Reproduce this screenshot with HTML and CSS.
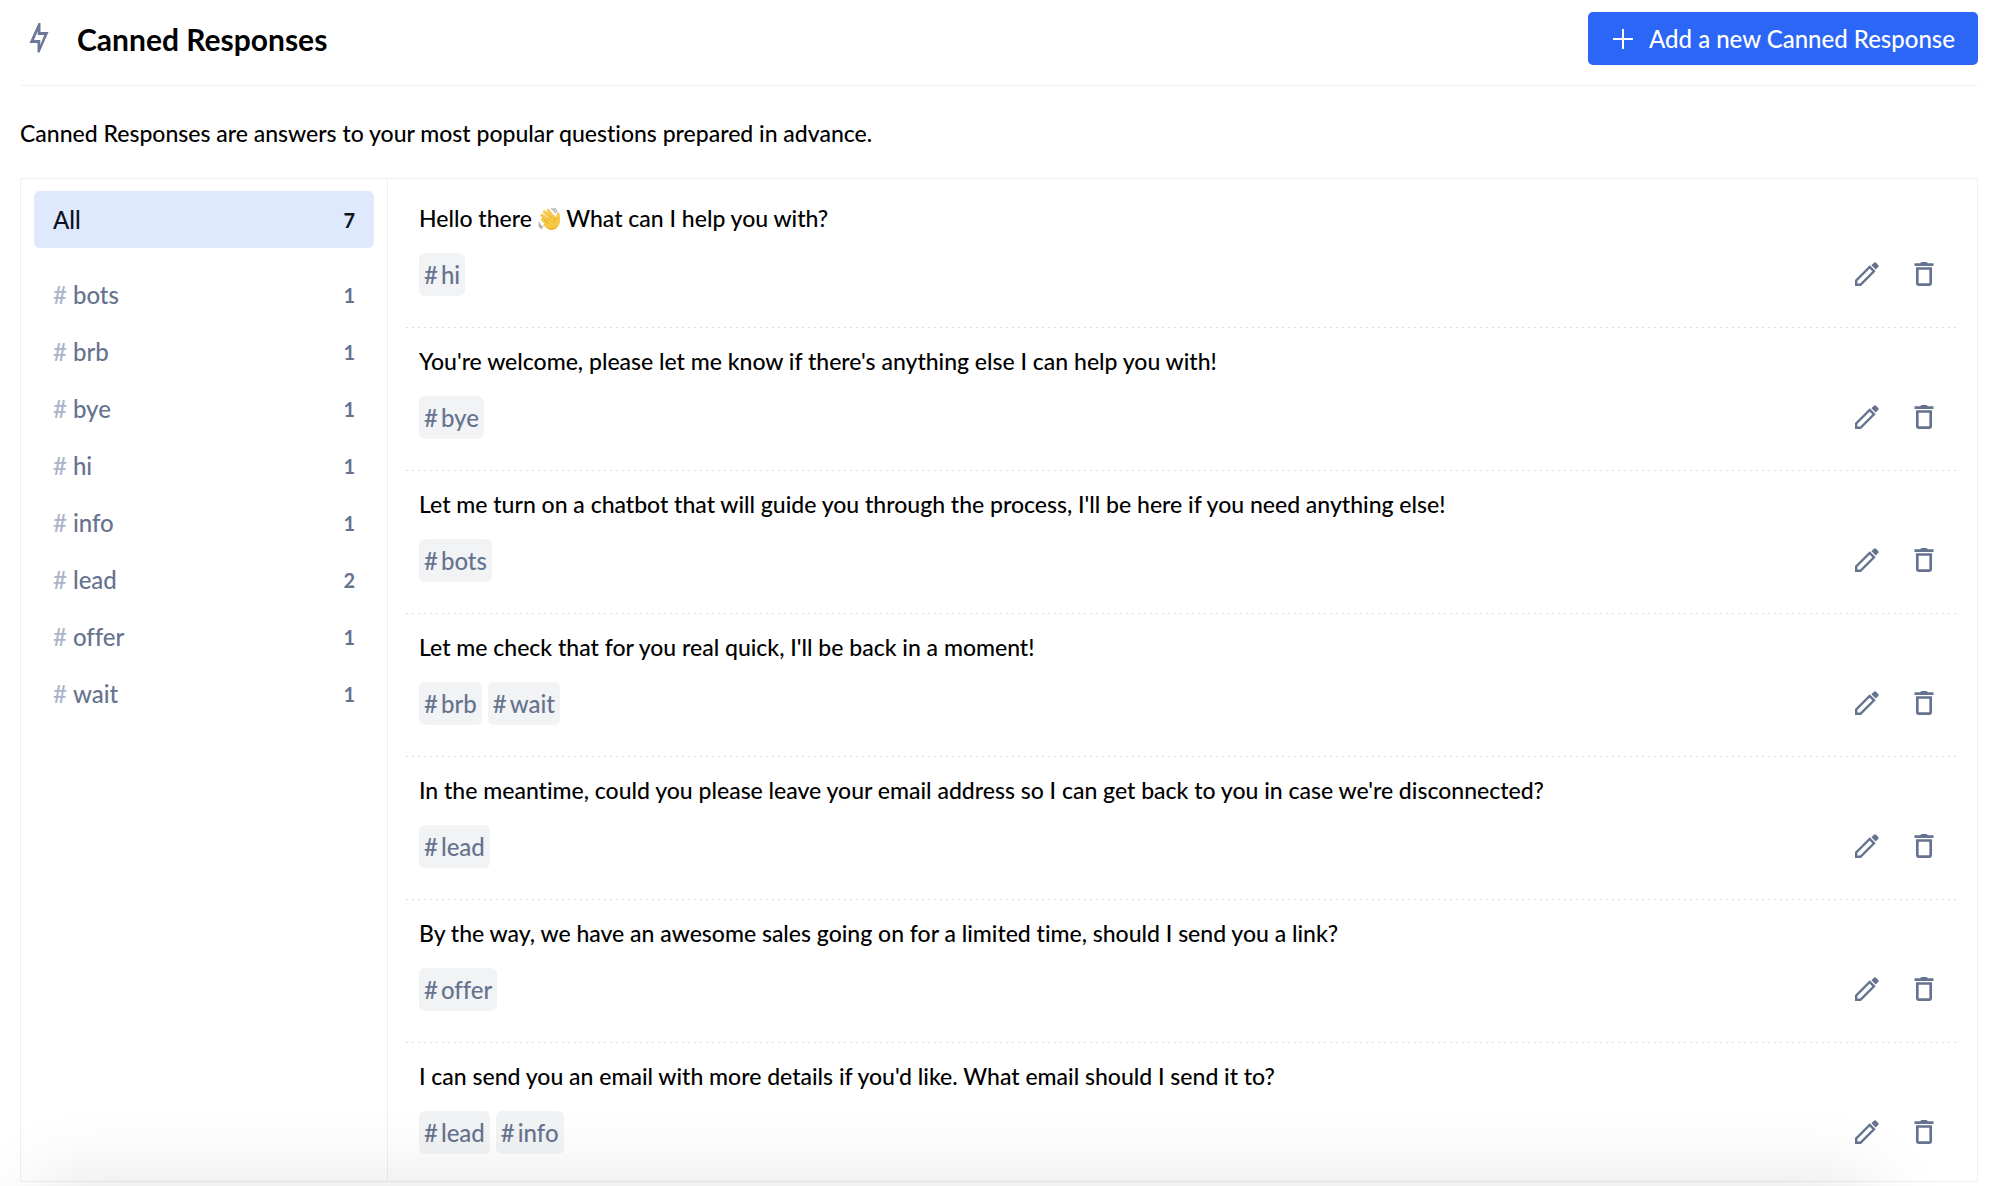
FILE: index.html
```
<!DOCTYPE html>
<html lang="en">
<head>
    <meta charset="UTF-8">
    <meta name="viewport" content="width=device-width, initial-scale=1.0">
    <title>Canned Responses</title>
    <link rel="stylesheet" href="styles.css">
</head>
<body>
    <!-- shared icons -->
    <svg class="sprite" aria-hidden="true">
        <symbol id="icon-edit" viewBox="0 0 24 24">
            <path fill="none" stroke="currentColor" stroke-width="2.400" d="M1.200 22.800v-4.300L14.700 5l4.300 4.300L5.500 22.800z"/>
            <path fill="currentColor" d="M16.400 3.300 18.900.8q1.100-1 2.200 0l2.100 2.100q1 1.100 0 2.200l-2.500 2.500z"/>
        </symbol>
        <symbol id="icon-trash" viewBox="0 0 24 24">
            <path fill="currentColor" d="M2.500 1.300h5.500L9.500 0h5l1.500 1.300h5.500V4h-19z"/>
            <path fill="none" stroke="currentColor" stroke-width="2.700" d="M5.300 6.500h13.400V21q0 1.600-1.600 1.600H6.900q-1.600 0-1.600-1.600z"/>
        </symbol>
    </svg>

    <header class="page-header">
        <svg class="bolt" viewBox="0 0 20 30" aria-hidden="true">
            <path fill="currentColor" fill-rule="evenodd" d="M9.500 0H11.500V9H19.500L10.500 29.500H8.500V20H.5zM8.700 8 5 17H11.300V22L15.200 12H8.700z"/>
        </svg>
        <h1>Canned Responses</h1>
        <button type="button" class="add-button">
            <svg viewBox="0 0 20 20" aria-hidden="true"><path stroke="currentColor" stroke-width="2" d="M10 0v20M0 10h20"/></svg>
            Add a new Canned Response
        </button>
    </header>

    <p class="intro">Canned Responses are answers to your most popular questions prepared in advance.</p>

    <main class="panel">
        <nav class="tags" aria-label="Tags">
            <a href="#" class="tag-link active"><span>All</span><b>7</b></a>
            <a href="#bots" class="tag-link"><span><i>#</i>bots</span><b>1</b></a>
            <a href="#brb" class="tag-link"><span><i>#</i>brb</span><b>1</b></a>
            <a href="#bye" class="tag-link"><span><i>#</i>bye</span><b>1</b></a>
            <a href="#hi" class="tag-link"><span><i>#</i>hi</span><b>1</b></a>
            <a href="#info" class="tag-link"><span><i>#</i>info</span><b>1</b></a>
            <a href="#lead" class="tag-link"><span><i>#</i>lead</span><b>2</b></a>
            <a href="#offer" class="tag-link"><span><i>#</i>offer</span><b>1</b></a>
            <a href="#wait" class="tag-link"><span><i>#</i>wait</span><b>1</b></a>
        </nav>

        <ul class="responses">
            <li class="response">
                <p>Hello there <svg class="wave" viewBox="0 0 24 24" role="img" aria-label="waving hand"><path fill="none" stroke="#a9abae" stroke-width="1.200" stroke-linecap="round" d="M14 1.500q3 .5 4 4M16.500.8q3 1 3.500 4M1 15.500q.5 3.500 4 5M.8 18.500q1 2.500 3 3.500"/><path fill="none" stroke="#f7c844" stroke-width="3" stroke-linecap="round" d="m4.500 12.500 6 6M4 8l8 8M6.500 4.500l8 8M10.500 3l6.500 8"/><path fill="#f7c844" d="M9 11l8-3 2.500 2.500q-.8-3.500.8-5 1.500-.8 2.200.8.2 2 .5 5 .5 5-2.500 9-3.500 4.200-8 3-4-1.300-7-5z"/><path fill="none" stroke="#df9b24" stroke-width=".8" stroke-linecap="round" d="m5.500 11.300 5 5M6.500 7.800l6 6M9.500 5.200l5.500 6M10 21.500q5 3.500 9.500-1.500M19.500 10.500q-3 .5-2.500 4"/></svg> What can I help you with?</p>
                <div class="response-row">
                    <div class="chips"><span><i>#</i>hi</span></div>
                    <div class="actions">
                        <button type="button" aria-label="Edit"><svg><use href="#icon-edit"/></svg></button>
                        <button type="button" aria-label="Delete"><svg><use href="#icon-trash"/></svg></button>
                    </div>
                </div>
            </li>
            <li class="response">
                <p>You're welcome, please let me know if there's anything else I can help you with!</p>
                <div class="response-row">
                    <div class="chips"><span><i>#</i>bye</span></div>
                    <div class="actions">
                        <button type="button" aria-label="Edit"><svg><use href="#icon-edit"/></svg></button>
                        <button type="button" aria-label="Delete"><svg><use href="#icon-trash"/></svg></button>
                    </div>
                </div>
            </li>
            <li class="response">
                <p>Let me turn on a chatbot that will guide you through the process, I'll be here if you need anything else!</p>
                <div class="response-row">
                    <div class="chips"><span><i>#</i>bots</span></div>
                    <div class="actions">
                        <button type="button" aria-label="Edit"><svg><use href="#icon-edit"/></svg></button>
                        <button type="button" aria-label="Delete"><svg><use href="#icon-trash"/></svg></button>
                    </div>
                </div>
            </li>
            <li class="response">
                <p>Let me check that for you real quick, I'll be back in a moment!</p>
                <div class="response-row">
                    <div class="chips"><span><i>#</i>brb</span><span><i>#</i>wait</span></div>
                    <div class="actions">
                        <button type="button" aria-label="Edit"><svg><use href="#icon-edit"/></svg></button>
                        <button type="button" aria-label="Delete"><svg><use href="#icon-trash"/></svg></button>
                    </div>
                </div>
            </li>
            <li class="response">
                <p>In the meantime, could you please leave your email address so I can get back to you in case we're disconnected?</p>
                <div class="response-row">
                    <div class="chips"><span><i>#</i>lead</span></div>
                    <div class="actions">
                        <button type="button" aria-label="Edit"><svg><use href="#icon-edit"/></svg></button>
                        <button type="button" aria-label="Delete"><svg><use href="#icon-trash"/></svg></button>
                    </div>
                </div>
            </li>
            <li class="response">
                <p>By the way, we have an awesome sales going on for a limited time, should I send you a link?</p>
                <div class="response-row">
                    <div class="chips"><span><i>#</i>offer</span></div>
                    <div class="actions">
                        <button type="button" aria-label="Edit"><svg><use href="#icon-edit"/></svg></button>
                        <button type="button" aria-label="Delete"><svg><use href="#icon-trash"/></svg></button>
                    </div>
                </div>
            </li>
            <li class="response">
                <p>I can send you an email with more details if you'd like. What email should I send it to?</p>
                <div class="response-row">
                    <div class="chips"><span><i>#</i>lead</span><span><i>#</i>info</span></div>
                    <div class="actions">
                        <button type="button" aria-label="Edit"><svg><use href="#icon-edit"/></svg></button>
                        <button type="button" aria-label="Delete"><svg><use href="#icon-trash"/></svg></button>
                    </div>
                </div>
            </li>
        </ul>
    </main>
    <div class="bottom-shadow"></div>
</body>
</html>
```
FILE: styles.css
```
* {
    box-sizing: border-box;
}
body {
    font-family: Lato, "Liberation Sans", sans-serif;
    font-size: 23px;
    font-weight: 500;
    font-variant-ligatures: none;
    line-height: 32px;
    margin: 0;
    padding: 0 26px 5px 20px;
    background-color: #fff;
    color: #000;
}
button {
    font: inherit;
    border: 0;
    cursor: pointer;
}
.sprite {
    display: none;
}
.page-header {
    display: flex;
    align-items: center;
    padding: 12px 0 20px;
    border-bottom: 1px solid #f1f2f4;
}
.bolt {
    width: 20px;
    height: 30px;
    margin: 0 28px 2px 9px;
    color: #6b7897;
}
h1 {
    font-size: 30px;
    font-weight: 700;
    line-height: 36px;
    margin: 0;
}
.add-button {
    display: flex;
    align-items: center;
    gap: 16px;
    height: 53px;
    margin-left: auto;
    padding: 0 23px 0 25px;
    border-radius: 5px;
    background-color: #2c66f6;
    color: #fff;
    font-size: 24px;
}
.add-button svg {
    width: 20px;
    height: 20px;
}
.intro {
    margin: 31px 0 29px;
}
.panel {
    display: flex;
    border: 1px solid #eef0f7;
}
.tags {
    flex: 0 0 367px;
    padding: 12px 13px;
    border-right: 1px solid #eef0f7;
}
.tag-link {
    display: flex;
    align-items: center;
    justify-content: space-between;
    height: 57px;
    padding: 0 19px;
    border-radius: 6px;
    color: #66738f;
    font-size: 24px;
    text-decoration: none;
}
.tag-link.active {
    margin-bottom: 18px;
    background-color: #dee9fd;
    color: #0b1220;
}
.tag-link i {
    margin-right: 6px;
    color: #aab4c8;
    font-style: normal;
}
.tag-link b {
    font-size: 20px;
    font-weight: 700;
}
.responses {
    flex: 1;
    margin: 0;
    padding: 6px 19px 0 18px;
    list-style: none;
}
.response {
    padding: 17px 13px 32px;
    background: repeating-linear-gradient(90deg, #dddfe5 0 2px, transparent 2px 6px) bottom / 100% 1px no-repeat;
}
.response:last-child {
    padding-bottom: 27px;
    background: none;
}
.response p {
    margin: 0 0 19px;
}
.wave {
    width: 23px;
    height: 24px;
    vertical-align: -4px;
}
.response-row {
    display: flex;
    align-items: flex-start;
    justify-content: space-between;
}
.chips {
    display: flex;
    gap: 6px;
}
.chips span {
    height: 43px;
    padding: 6px 5px 5px;
    border-radius: 6px;
    background-color: #f2f3f5;
    color: #66738f;
    font-size: 24px;
}
.chips i {
    margin-right: 3px;
    font-style: normal;
}
.actions {
    display: flex;
    gap: 33px;
    padding: 9px 9px 0 0;
}
.actions button {
    padding: 0;
    background: none;
    color: #66738f;
}
.actions svg {
    display: block;
    width: 24px;
    height: 24px;
}
.bottom-shadow {
    position: fixed;
    top: 100%;
    left: 36px;
    right: 130px;
    height: 60px;
    box-shadow: 0 0 80px rgba(0, 0, 0, 0.13);
    pointer-events: none;
}
```
